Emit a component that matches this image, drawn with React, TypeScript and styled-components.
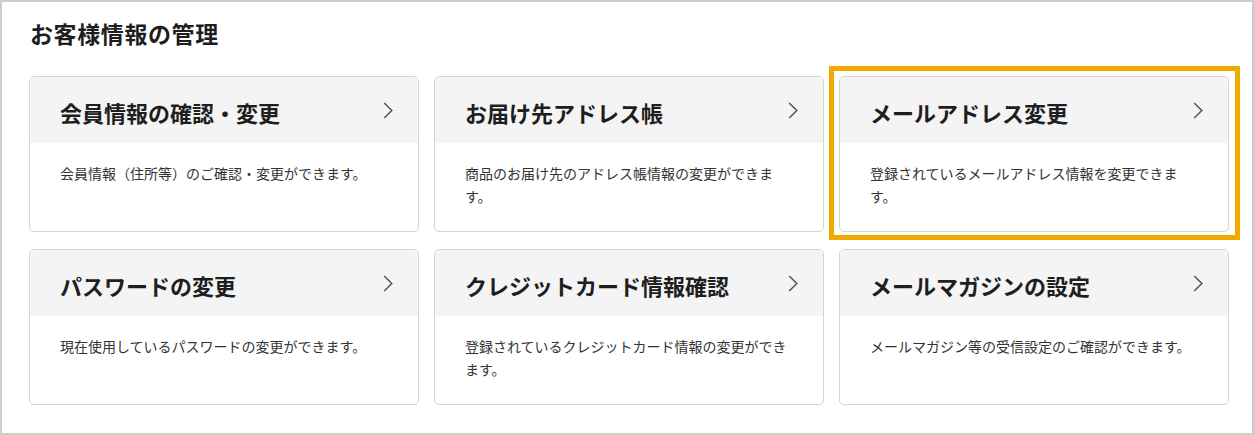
import styled, { createGlobalStyle } from "styled-components";

const GlobalStyle = createGlobalStyle`
  html, body {
    margin: 0;
    padding: 0;
    background: #ffffff;
  }
  body {
    font-family: "Noto Sans CJK JP", "Noto Sans", sans-serif;
    color: #222;
  }
`;

const items = [
  {
    title: "会員情報の確認・変更",
    text: "会員情報（住所等）のご確認・変更ができます。",
  },
  {
    title: "お届け先アドレス帳",
    text: "商品のお届け先のアドレス帳情報の変更ができます。",
  },
  {
    title: "メールアドレス変更",
    text: "登録されているメールアドレス情報を変更できます。",
    focused: true,
  },
  {
    title: "パスワードの変更",
    text: "現在使用しているパスワードの変更ができます。",
  },
  {
    title: "クレジットカード情報確認",
    text: "登録されているクレジットカード情報の変更ができます。",
  },
  {
    title: "メールマガジンの設定",
    text: "メールマガジン等の受信設定のご確認ができます。",
  },
];

const Chevron = () => (
  <svg width="10" height="17" viewBox="0 0 10 17" fill="none">
    <path d="M1.2 1L8.8 8.5L1.2 16" stroke="#555" strokeWidth="1.5" />
  </svg>
);

const App = () => {
  return (
    <>
      <GlobalStyle />
      <Frame>
        <Heading>お客様情報の管理</Heading>
        <Grid>
          {items.map((item) => (
            <Card key={item.title} href="#">
              {item.focused && <FocusRing />}
              <CardHead>
                <CardTitle>{item.title}</CardTitle>
                <Chevron />
              </CardHead>
              <CardBody>{item.text}</CardBody>
            </Card>
          ))}
        </Grid>
      </Frame>
    </>
  );
};

export default App;

const Frame = styled.div`
  box-sizing: border-box;
  width: 1255px;
  height: 435px;
  border: 2px solid #d0cdc8;
  border-right-width: 3px;
  padding: 19px 0 0 27px;
`;

const Heading = styled.h2`
  margin: 0 0 31px 1px;
  font-size: 23px;
  line-height: 24px;
  font-weight: 700;
  letter-spacing: 0.6px;
  color: #1e1e1e;
`;

const Grid = styled.div`
  display: grid;
  grid-template-columns: repeat(3, 390px);
  column-gap: 15px;
  row-gap: 17px;
`;

const Card = styled.a`
  position: relative;
  display: flex;
  flex-direction: column;
  height: 156px;
  box-sizing: border-box;
  border: 1px solid #d4d4d4;
  border-radius: 5px;
  text-decoration: none;
  color: inherit;
`;

const FocusRing = styled.span`
  position: absolute;
  top: -11px;
  left: -11px;
  right: -12px;
  bottom: -9px;
  border: 5px solid #f1aa00;
  pointer-events: none;
`;

const CardHead = styled.div`
  display: flex;
  align-items: center;
  justify-content: space-between;
  height: 66px;
  padding: 0 25px 0 30px;
  background: #f4f4f4;
  border-radius: 4px 4px 0 0;
`;

const CardTitle = styled.span`
  font-size: 22px;
  font-weight: 700;
  color: #1e1e1e;
  padding-top: 3px;
`;

const CardBody = styled.p`
  margin: 0;
  padding: 19px 33px 0 30px;
  font-size: 14px;
  line-height: 23px;
  color: #333;
`;
